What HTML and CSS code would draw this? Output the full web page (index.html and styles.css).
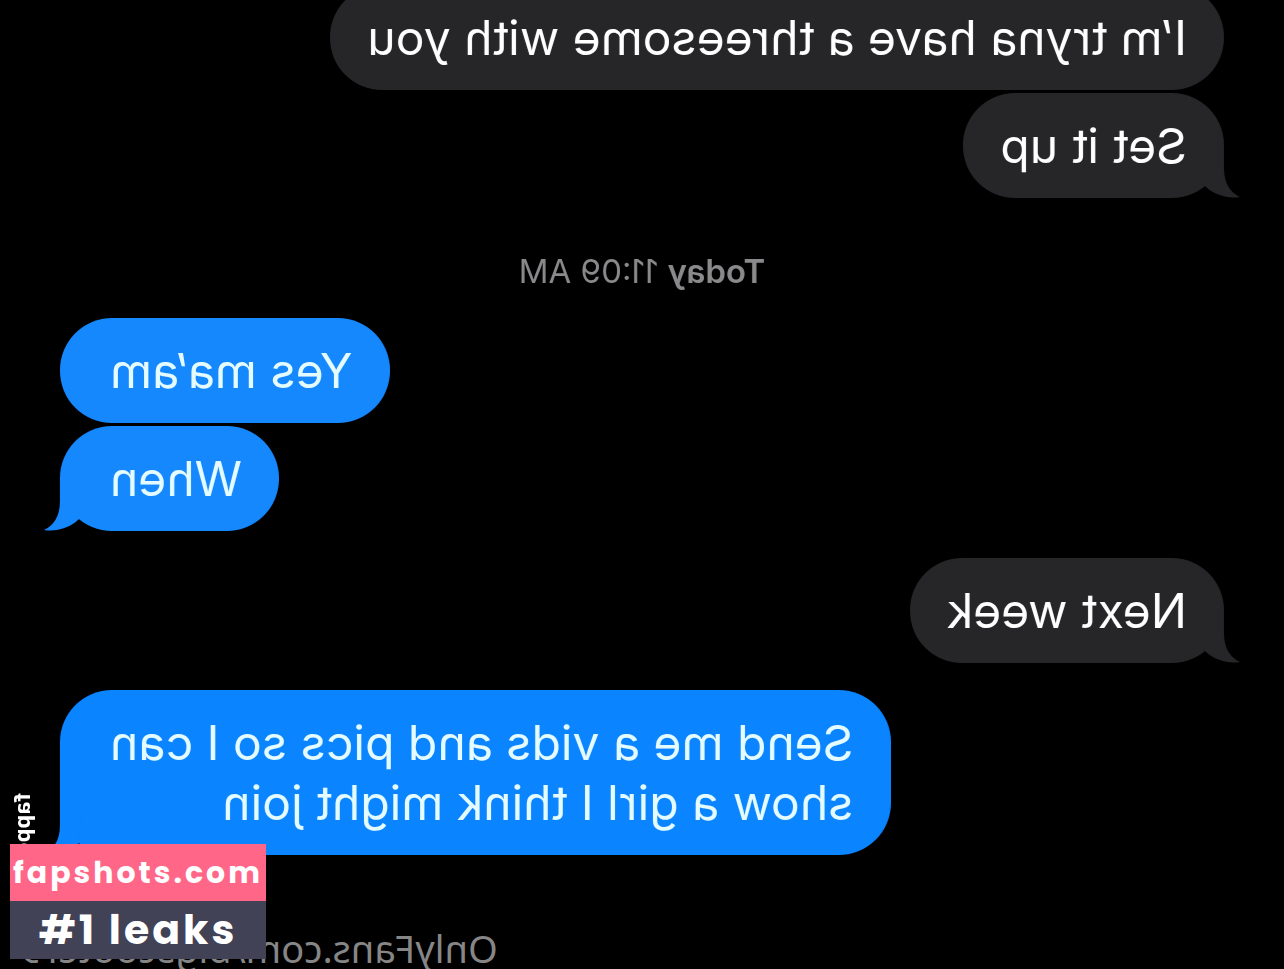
FILE: index.html
```
<!DOCTYPE html>
<html lang="en">
<head>
    <meta charset="UTF-8">
    <meta name="viewport" content="width=device-width, initial-scale=1.0">
    <title>Messages</title>
    <link rel="stylesheet" href="styles.css">
</head>
<body>
    <main class="chat mirrored">
        <p class="bubble received first">I’m tryna have a threesome with you</p>
        <p class="bubble received">
            Set it up
            <svg class="tail" viewBox="0 0 40 54"><path d="M16 0V24C16 40 9 49 0 53C12 55 26 51 35 42L40 0Z"/></svg>
        </p>

        <p class="timestamp"><b>Today</b> 11:09 AM</p>

        <p class="bubble sent">Yes ma’am</p>
        <p class="bubble sent">
            When
            <svg class="tail" viewBox="0 0 40 54"><path d="M16 0V24C16 40 9 49 0 53C12 55 26 51 35 42L40 0Z"/></svg>
        </p>

        <p class="bubble received reply">
            Next week
            <svg class="tail" viewBox="0 0 40 54"><path d="M16 0V24C16 40 9 49 0 53C12 55 26 51 35 42L40 0Z"/></svg>
        </p>

        <p class="bubble sent bright reply">
            Send me a vids and pics so I can<br>show a girl I think might join
            <svg class="tail" viewBox="0 0 40 54"><path d="M16 0V24C16 40 9 49 0 53C12 55 26 51 35 42L40 0Z"/></svg>
        </p>
    </main>

    <!-- watermarks -->
    <div class="credit mirrored">OnlyFans.com/bigscooter9</div>
    <div class="side-mark"><span class="mirrored">fappening.boo</span></div>
    <div class="badge">
        <div class="badge-site">fapshots.com</div>
        <div class="badge-note">#1 leaks</div>
    </div>
</body>
</html>
```

FILE: styles.css
```
body {
    margin: 0;
    position: relative;
    height: 100vh;
    overflow: hidden;
    background-color: #000;
    font-family: Inter, "Liberation Sans", sans-serif;
}

.mirrored {
    transform: scaleX(-1);
}

.chat {
    display: flex;
    flex-direction: column;
    gap: 3px;
    padding: 0 60px;
}

.bubble {
    position: relative;
    margin: 0;
    padding: 23px 37px 22px;
    border-radius: 52px;
    color: #fff;
    font-size: 48px;
    line-height: 60px;
}

.received {
    align-self: flex-start;
    background-color: #262628;
}

.sent {
    align-self: flex-end;
    padding-right: 50px;
    background-color: #1588fe;
    color: #e4fcff;
}

.bright {
    background-color: #0a84ff;
}

/* the first message is scrolled partly off the top */
.first {
    margin-top: -15px;
}

.reply {
    margin-top: 24px;
}

.tail {
    position: absolute;
    bottom: 0;
    left: -16px;
    width: 40px;
    height: 54px;
    fill: #262628;
}

.sent .tail {
    left: auto;
    right: -16px;
    fill: #1588fe;
    transform: scaleX(-1);
}

.bright .tail {
    fill: #0a84ff;
}

.timestamp {
    margin: 50px 0 24px;
    color: #8a8a8d;
    font-size: 33px;
    line-height: 40px;
    text-align: center;
}

.timestamp b {
    font-weight: 600;
}

.credit {
    position: absolute;
    left: 20px;
    bottom: -4px;
    color: #868686;
    font-family: "Noto Sans", sans-serif;
    font-size: 38px;
    line-height: 50px;
}

.side-mark {
    position: absolute;
    left: 7px;
    top: 793px;
    color: #fff;
    font-family: "Noto Sans", sans-serif;
    font-size: 22px;
    font-weight: 700;
    line-height: 28px;
    writing-mode: vertical-rl;
}

.side-mark span {
    display: block;
}

.badge {
    position: absolute;
    left: 10px;
    bottom: 10px;
    width: 256px;
    color: #fff;
    font-family: Poppins, Inter, sans-serif;
    font-weight: 700;
    text-align: center;
    white-space: nowrap;
}

.badge-site {
    background-color: #ff6688;
    font-size: 30px;
    line-height: 57px;
    letter-spacing: 3px;
}

.badge-note {
    background-color: #414255;
    font-size: 41px;
    line-height: 58px;
    letter-spacing: 3px;
}
```
